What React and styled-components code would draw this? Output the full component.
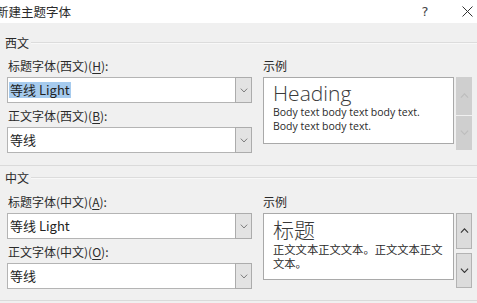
import React from "react";
import styled, { createGlobalStyle } from "styled-components";

const GlobalStyle = createGlobalStyle`
  html, body {
    margin: 0;
    padding: 0;
    background: #f0f0f0;
    overflow: hidden;
  }
  body {
    font-family: "Noto Sans CJK SC", "Noto Sans", sans-serif;
    font-size: 12px;
    color: #2a2a2a;
  }
`;

const Dialog = styled.div`
  width: 477px;
  height: 303px;
  background: #f0f0f0;
  overflow: hidden;
`;

const TitleBar = styled.div`
  height: 23px;
  background: #ffffff;
  display: flex;
  align-items: center;
`;

const Title = styled.div`
  margin-left: -4px;
  font-size: 12.5px;
  color: #2a2a2a;
  flex: 1;
`;

const TitleIcon = styled.div`
  width: 20px;
  margin-right: ${(p) => p.gap || 0}px;
  display: flex;
  justify-content: center;
  font-size: 13px;
  color: #444;
  font-family: "DejaVu Sans", sans-serif;
`;

const Group = styled.div`
  padding: ${(p) => p.top}px 5px ${(p) => p.bottom}px 7px;
  border-bottom: 1px solid #dadada;
`;

const GroupHeader = styled.div`
  display: flex;
  align-items: center;
  height: 16px;
  margin-left: -2px;
  margin-right: -5px;
  gap: 2px;
  font-size: 12px;
  &::after {
    content: "";
    flex: 1;
    height: 1px;
    background: #dcdcdc;
    box-shadow: 0 1px 0 #f8f8f8;
  }
`;

const GroupBody = styled.div`
  display: grid;
  grid-template-columns: 245px 209px;
  column-gap: 11px;
  margin-top: ${(p) => p.gap}px;
`;

const Column = styled.div`
  display: flex;
  flex-direction: column;
`;

const Label = styled.div`
  height: 20px;
  line-height: 20px;
  margin-bottom: 1px;
  padding-left: ${(p) => (p.indent ? 1 : 0)}px;
  font-size: 12px;
  color: #2a2a2a;
  u {
    text-decoration: underline;
    text-underline-offset: 2px;
  }
`;

const Combo = styled.div`
  display: flex;
  height: 26px;
  margin-bottom: 3px;
`;

const ComboInput = styled.div`
  flex: 1;
  display: flex;
  align-items: center;
  background: #fff;
  border: 1px solid #b4b4b4;
  border-right: none;
  padding-left: 1px;
  font-size: 13px;
  color: #222;
`;

const Selected = styled.span`
  background: ${(p) => (p.active ? "#a6cbee" : "transparent")};
  padding: 0 1px;
  line-height: 16px;
`;

const DropButton = styled.div`
  width: 15px;
  background: #e3e3e3;
  border: 1px solid #acacac;
  display: flex;
  align-items: center;
  justify-content: center;
`;

const PreviewRow = styled.div`
  display: flex;
  align-items: flex-start;
`;

const Preview = styled.div`
  width: 191px;
  height: ${(p) => p.h}px;
  background: #fff;
  border: 1px solid #a9a9a9;
  box-sizing: border-box;
  padding: ${(p) => p.pad}px 6px 0 9px;
`;

const SampleHeading = styled.div`
  font-size: ${(p) => p.size}px;
  font-weight: 300;
  line-height: ${(p) => p.lh}px;
  color: #3a3a3a;
  font-family: ${(p) =>
    p.latin
      ? '"Open Sans", "Noto Sans", sans-serif'
      : '"Noto Sans CJK SC", sans-serif'};
`;

const SampleLine = styled.div`
  font-size: ${(p) => p.size}px;
  line-height: 13.5px;
  color: #2a2a2a;
  white-space: nowrap;
  font-family: ${(p) =>
    p.latin
      ? '"Open Sans", "Noto Sans", sans-serif'
      : '"Noto Sans CJK SC", sans-serif'};
`;

const Scroller = styled.div`
  display: flex;
  flex-direction: column;
  gap: ${(p) => (p.disabled ? 1 : 4)}px;
  margin-left: 2px;
  width: 16px;
`;

const ScrollButton = styled.div`
  height: ${(p) => p.h}px;
  background: ${(p) => (p.disabled ? "#cfcfcf" : "#dcdcdc")};
  border: ${(p) => (p.disabled ? "none" : "1px solid #b3b3b3")};
  box-sizing: border-box;
  display: flex;
  align-items: center;
  justify-content: center;
`;

const Footer = styled.div`
  margin: 5px 0 0 58px;
  height: 10px;
  border-top: 2px solid #8e8e8e;
  background: #e6e6e6;
`;

const Chevron = ({ up, color = "#6a6a6a", size = 9 }) => (
  <svg width={size} height={size * 0.6} viewBox="0 0 10 6">
    <path
      d={up ? "M1 5.2 L5 1 L9 5.2" : "M1 0.8 L5 5 L9 0.8"}
      fill="none"
      stroke={color}
      strokeWidth="1.2"
    />
  </svg>
);

const CloseIcon = () => (
  <svg width="11" height="11" viewBox="0 0 11 11">
    <path d="M0.5 0.5 L10.5 10.5 M10.5 0.5 L0.5 10.5" stroke="#333" strokeWidth="1" />
  </svg>
);

const Field = ({ text, active }) => (
  <Combo>
    <ComboInput>
      <Selected active={active}>{text}</Selected>
    </ComboInput>
    <DropButton>
      <Chevron size={8} color="#777" />
    </DropButton>
  </Combo>
);

const Section = ({ name, labels, top, bottom, gap, sample, disabled, activeFirst }) => (
  <Group top={top} bottom={bottom}>
    <GroupHeader>{name}</GroupHeader>
    <GroupBody gap={gap}>
      <Column>
        <Label indent>{labels[0]}</Label>
        <Field text="等线 Light" active={activeFirst} />
        <Label indent>{labels[1]}</Label>
        <Field text="等线" />
      </Column>
      <Column>
        <Label>示例</Label>
        <PreviewRow>
          <Preview h={sample.h} pad={sample.pad}>
            <SampleHeading latin={sample.latin} size={sample.headSize} lh={sample.headLh}>
              {sample.heading}
            </SampleHeading>
            {sample.lines.map((line) => (
              <SampleLine key={line} latin={sample.latin} size={sample.bodySize}>
                {line}
              </SampleLine>
            ))}
          </Preview>
          <Scroller disabled={disabled}>
            <ScrollButton disabled={disabled} h={disabled ? 38 : 36}>
              <Chevron up size={9} color={disabled ? "#bdbdbd" : "#333"} />
            </ScrollButton>
            <ScrollButton disabled={disabled} h={disabled ? 34 : 35}>
              <Chevron size={9} color={disabled ? "#bdbdbd" : "#333"} />
            </ScrollButton>
          </Scroller>
        </PreviewRow>
      </Column>
    </GroupBody>
  </Group>
);

export default function App() {
  return (
    <Dialog>
      <GlobalStyle />
      <TitleBar>
        <Title>新建主题字体</Title>
        <TitleIcon gap={22}>?</TitleIcon>
        <TitleIcon>
          <CloseIcon />
        </TitleIcon>
      </TitleBar>
      <Section
        name="西文"
        top={11}
        bottom={9}
        gap={6}
        disabled
        activeFirst
        labels={[
          <>标题字体(西文)(<u>H</u>):</>,
          <>正文字体(西文)(<u>B</u>):</>,
        ]}
        sample={{
          latin: true,
          h: 67,
          pad: 2,
          heading: "Heading",
          headSize: 21,
          headLh: 26,
          bodySize: 10.5,
          lines: ["Body text body text body text.", "Body text body text."],
        }}
      />
      <Section
        name="中文"
        top={3}
        bottom={8}
        gap={7}
        labels={[
          <>标题字体(中文)(<u>A</u>):</>,
          <>正文字体(中文)(<u>O</u>):</>,
        ]}
        sample={{
          latin: false,
          h: 67,
          pad: 1,
          heading: "标题",
          headSize: 21,
          headLh: 28,
          bodySize: 11.3,
          lines: ["正文文本正文文本。正文文本正文", "文本。"],
        }}
      />
      <Footer />
    </Dialog>
  );
}
